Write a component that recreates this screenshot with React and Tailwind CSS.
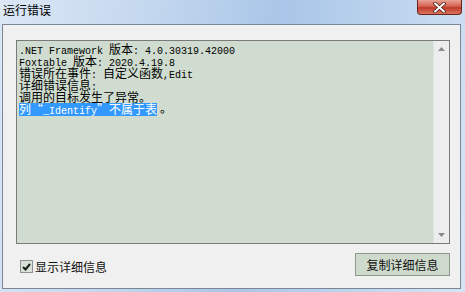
import React from "react";

const cjk = "font-['Noto_Sans_CJK_SC',sans-serif] text-[12px] leading-[12px]";

const Zh = ({ children }) => <span className={cjk}>{children}</span>;

const App = () => {
  return (
    <div className="w-[465px] h-[292px] flex flex-col overflow-hidden bg-[linear-gradient(100deg,#dbe7f5_0%,#c3d7ee_30%,#a9c6e8_55%,#c0d6ee_80%,#d6e5f4_100%)] font-['Noto_Sans_CJK_SC',sans-serif]">
      {/* Title bar */}
      <div className="h-[24px] flex items-start justify-between shrink-0">
        <span className="pl-[3px] pt-[1px] text-[12px] leading-[18px] text-black">运行错误</span>
        <div className="mr-[3px] w-[45px] h-[15px] rounded-b-[4px] border border-t-0 border-[#6b2219] bg-[linear-gradient(180deg,#e9a395_0%,#d3614f_45%,#c0392b_55%,#d8755f_100%)] flex items-center justify-center">
          <svg width="13" height="11" viewBox="0 0 13 11">
            <path d="M2 1.5 L11 9.5 M11 1.5 L2 9.5" stroke="#4a1a14" strokeWidth="3.6" strokeLinecap="round" />
            <path d="M2 1.5 L11 9.5 M11 1.5 L2 9.5" stroke="#ffffff" strokeWidth="2" strokeLinecap="round" />
          </svg>
        </div>
      </div>

      {/* Client area */}
      <div className="ml-[2px] mr-[4px] mb-[3px] flex-1 border border-[#7b8796] bg-[#f0f0f0] flex flex-col">
        {/* Details box */}
        <div className="mt-[15px] ml-[13px] mr-[10px] h-[204px] border border-[#7a7a7a] bg-[#cfdccf] flex">
          <div className="flex-1 pl-[2px] pt-[2px] font-['Liberation_Mono',monospace] text-[10px] text-black whitespace-pre">
            <div className="h-[12px] leading-[12px]">.NET Framework <Zh>版本</Zh>: 4.0.30319.42000</div>
            <div className="h-[12px] leading-[12px]">Foxtable <Zh>版本</Zh>: 2020.4.19.8</div>
            <div className="h-[12px] leading-[12px]"><Zh>错误所在事件</Zh>: <Zh>自定义函数</Zh>,Edit</div>
            <div className="h-[12px] leading-[12px]"><Zh>详细错误信息</Zh>:</div>
            <div className="h-[12px] leading-[12px]"><Zh>调用的目标发生了异常。</Zh></div>
            <div className="h-[12px] leading-[12px] flex items-center">
              <span className="bg-[#3399ff] text-white h-[13px] leading-[13px]">
                <Zh>列“</Zh>_Identify<Zh>”不属于表</Zh>
              </span>
              <span className="ml-[3px]"><Zh>。</Zh></span>
            </div>
          </div>
          {/* Scrollbar */}
          <div className="w-[16px] bg-[#ededed] border-l border-[#e0e4e0] flex flex-col items-center justify-between py-[6px]">
            <svg width="7" height="4" viewBox="0 0 7 4"><path d="M0 4 L3.5 0 L7 4 Z" fill="#8a8a8a" /></svg>
            <svg width="7" height="4" viewBox="0 0 7 4"><path d="M0 0 L3.5 4 L7 0 Z" fill="#8a8a8a" /></svg>
          </div>
        </div>

        {/* Bottom row */}
        <div className="mt-[9px] ml-[17px] mr-[10px] flex items-center justify-between">
          <label className="flex items-center gap-[2px] mt-[4px]">
            <span className="w-[13px] h-[13px] border border-[#8f8f8f] bg-[#d6e2d5] flex items-center justify-center">
              <svg width="9" height="8" viewBox="0 0 9 8">
                <path d="M1 4 L3.5 6.5 L8 1" stroke="#1a1a1a" strokeWidth="2" fill="none" />
              </svg>
            </span>
            <span className="text-[12px] leading-[16px] text-[#111]">显示详细信息</span>
          </label>
          <button className="w-[95px] h-[23px] border border-[#8c9a8c] bg-[#cddacc] text-[12px] leading-[16px] text-[#111]">
            复制详细信息
          </button>
        </div>
      </div>
    </div>
  );
};

export default App;
